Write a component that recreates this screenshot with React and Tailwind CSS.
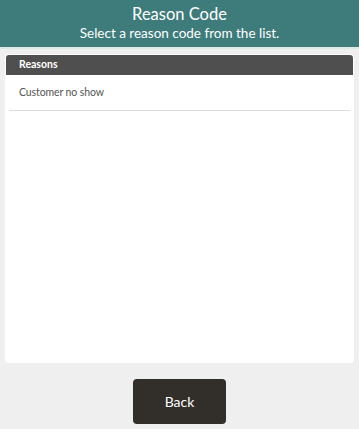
export default function App() {
  return (
    <div className="flex h-[429px] w-full flex-col bg-[#efefef] font-['Lato',sans-serif]">
      {/* Title bar */}
      <div className="flex h-[49px] flex-col items-center justify-center border-b-2 border-[#dcebea] bg-[#3e7b7b] pb-[1px] text-white">
        <div className="text-[16.5px] leading-[20px]">Reason Code</div>
        <div className="text-[13.5px] leading-[18px]">Select a reason code from the list.</div>
      </div>

      {/* List panel */}
      <div className="mx-[5px] mt-[5px] h-[309px] rounded-[4px] bg-white p-[1px]">
        <div className="flex h-[20px] items-center rounded-t-[3px] bg-[#4f4f4f] pl-[13px] text-[10.5px] font-bold text-white">
          Reasons
        </div>
        <div className="mx-[3px] flex h-[36px] items-center border-b border-[#dddddd] pl-[10px] text-[10.5px] tracking-[-0.1px] text-[#555555]">
          Customer no show
        </div>
      </div>

      {/* Footer */}
      <div className="flex justify-center pt-[16px]">
        <button className="h-[45px] w-[93px] rounded-[4px] bg-[#322e2a] text-[14px] text-white">
          Back
        </button>
      </div>
    </div>
  );
}
